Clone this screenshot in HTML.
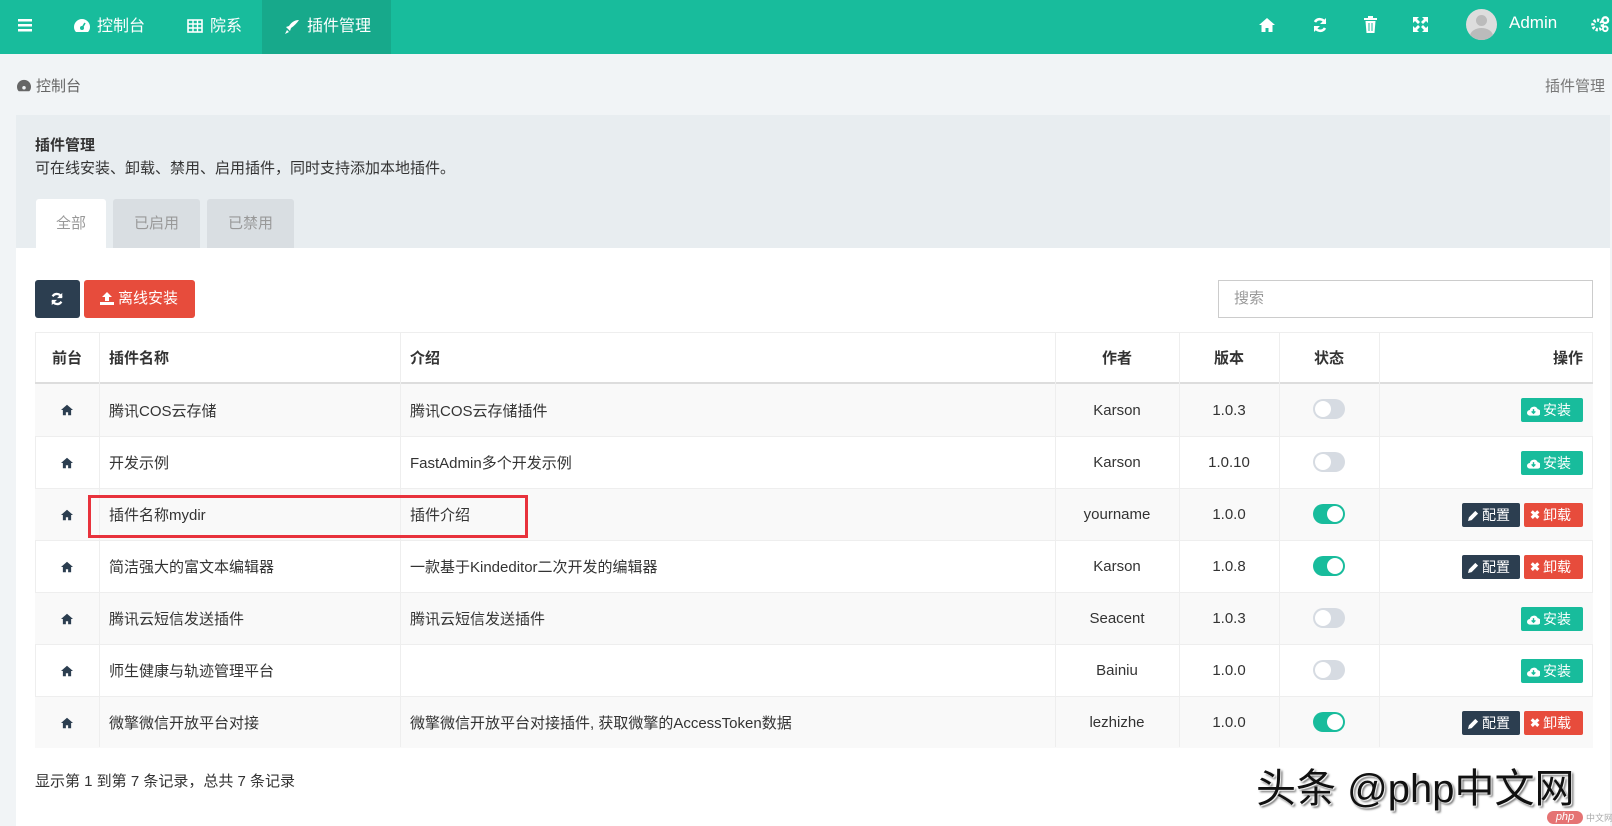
<!DOCTYPE html>
<html><head><meta charset="utf-8"><style>
*{margin:0;padding:0;box-sizing:border-box}
body{width:1612px;height:826px;overflow:hidden;background:#f1f4f6;font-family:"Liberation Sans","Noto Sans CJK SC",sans-serif;font-size:15px;color:#333;position:relative}
.a{position:absolute}
.nav{left:0;top:0;width:1612px;height:54px;background:#18bc9c}
.nt{position:absolute;color:#fff;font-size:16px;top:0;height:54px;line-height:54px;white-space:nowrap}
.panel{left:16px;top:115px;width:1594px;height:711px;background:#fff}
.ph{left:16px;top:115px;width:1594px;height:133px;background:#e8edf0}
.tab{top:199px;height:49px;line-height:49px;text-align:center;font-size:15px;color:#999;background:#d9dee2;border-radius:3px 3px 0 0}
.row{left:35px;width:1558px;height:52px;border-top:1px solid #eee}
.c{position:absolute;top:0;height:100%;display:flex;align-items:center;padding:0 10px;font-size:15px}
.vl{position:absolute;top:332px;width:1px;height:415px;background:#eee}
.tg{position:absolute;width:32px;height:20px;border-radius:10px;background:#d6dbe2}
.tg::after{content:"";position:absolute;top:2px;left:2px;width:16px;height:16px;border-radius:50%;background:#fff}
.tg.on{background:#18bc9c}.tg.on::after{left:14px}
.btn{position:absolute;height:24px;line-height:24px;color:#fff;font-size:14px;border-radius:2px;padding:0 6px;display:flex;align-items:center;gap:3px;white-space:nowrap}
</style></head><body>
<div class="a nav"></div>
<div class="a" style="left:262px;top:0;width:129px;height:54px;background:#17a98b"></div>
<svg class="a" style="left:18px;top:17px" width="16" height="16" viewBox="0 0 16 16"><rect y="2" width="14" height="2.5" fill="#fff"/><rect y="7" width="14" height="2.5" fill="#fff"/><rect y="12" width="14" height="2.5" fill="#fff"/></svg>
<svg class="a" style="left:73px;top:18px" width="18" height="16" viewBox="0 0 18 16"><path d="M9 1a8 8 0 0 0-8 8c0 2 .7 3.8 2 5h12c1.3-1.2 2-3 2-5a8 8 0 0 0-8-8z" fill="#fff"/><circle cx="9" cy="10" r="2" fill="#18bc9c"/><path d="M9 10l3-5" stroke="#18bc9c" stroke-width="1.6"/></svg>
<div class="nt" style="left:97px">控制台</div>
<svg class="a" style="left:187px;top:19px" width="16" height="14" viewBox="0 0 16 14"><rect x="1" y="1" width="14" height="12" fill="none" stroke="#fff" stroke-width="1.6"/><path d="M1 5h14M1 9h14M6 1v12M10.5 1v12" stroke="#fff" stroke-width="1.4"/></svg>
<div class="nt" style="left:210px">院系</div>
<svg class="a" style="left:284px;top:19px" width="16" height="16" viewBox="0 0 16 16"><path d="M15 1c-5 0-8 3-10 6l-3 1 2 2 2 2 1-3c3-2 6-5 8-8z M3 11l-2 4 4-2z" fill="#fff"/></svg>
<div class="nt" style="left:307px">插件管理</div>
<svg class="a" style="left:1258px;top:17px" width="18" height="16" viewBox="0 0 18 16"><path d="M9 1L1 8h2.5v7h4v-4h3v4h4V8H17z" fill="#fff"/></svg>
<svg class="a" style="left:1312px;top:17px" width="16" height="16" viewBox="0 0 16 16"><path d="M13 6a5.5 5.5 0 0 0-10-1M3 10a5.5 5.5 0 0 0 10 1" stroke="#fff" stroke-width="2.6" fill="none"/><path d="M14 1v6H8zM2 15V9h6z" fill="#fff"/></svg>
<svg class="a" style="left:1364px;top:16px" width="13" height="17" viewBox="0 0 13 17"><rect x="0" y="2" width="13" height="2" fill="#fff"/><rect x="4" y="0" width="5" height="2" fill="#fff"/><path d="M1.5 5h10l-1 12h-8z" fill="#fff"/><path d="M5 7v8M8 7v8" stroke="#18bc9c" stroke-width="1"/></svg>
<svg class="a" style="left:1412px;top:16px" width="17" height="17" viewBox="0 0 17 17"><path d="M1 1h6L5 3l3 3-2 2-3-3-2 2zM16 1v6l-2-2-3 3-2-2 3-3-2-2zM1 16v-6l2 2 3-3 2 2-3 3 2 2zM16 16h-6l2-2-3-3 2-2 3 3 2-2z" fill="#fff"/></svg>
<div class="a" style="left:1466px;top:9px;width:31px;height:31px;border-radius:50%;background:#ddd;overflow:hidden"><div class="a" style="left:10px;top:6px;width:11px;height:11px;border-radius:50%;background:#bbb"></div><div class="a" style="left:4px;top:19px;width:23px;height:16px;border-radius:50%;background:#bbb"></div></div>
<div class="nt" style="left:1509px;font-size:17px;line-height:46px">Admin</div>
<svg class="a" style="left:1591px;top:15px" width="19" height="18" viewBox="0 0 20 18"><circle cx="7" cy="10" r="5" fill="none" stroke="#fff" stroke-width="3.5" stroke-dasharray="2.2 1.6"/><circle cx="15" cy="5" r="3" fill="none" stroke="#fff" stroke-width="2.5"/><circle cx="15" cy="14" r="2.5" fill="none" stroke="#fff" stroke-width="2"/></svg>
<svg class="a" style="left:16px;top:79px" width="16" height="14" viewBox="0 0 18 16"><path d="M9 1a8 8 0 0 0-8 8c0 2 .7 3.8 2 5h12c1.3-1.2 2-3 2-5a8 8 0 0 0-8-8z" fill="#666"/><circle cx="9" cy="10" r="2" fill="#f1f4f6"/></svg>
<div class="a" style="left:36px;top:75px;font-size:15px;color:#666">控制台</div>
<div class="a" style="left:1545px;top:75px;font-size:15px;color:#777">插件管理</div>
<div class="a panel"></div>
<div class="a ph"></div>
<div class="a" style="left:35px;top:134px;font-size:15px;font-weight:bold;color:#333">插件管理</div>
<div class="a" style="left:35px;top:157px;font-size:15px;color:#333">可在线安装、卸载、禁用、启用插件，同时支持添加本地插件。</div>
<div class="a tab" style="left:36px;width:70px;background:#fff;color:#999">全部</div>
<div class="a tab" style="left:113px;width:87px">已启用</div>
<div class="a tab" style="left:207px;width:87px">已禁用</div>
<div class="a" style="left:35px;top:280px;width:45px;height:38px;background:#2c3e50;border-radius:3px"></div>
<svg class="a" style="left:50px;top:292px" width="14" height="14" viewBox="0 0 16 16"><path d="M13 6a5.5 5.5 0 0 0-10-1M3 10a5.5 5.5 0 0 0 10 1" stroke="#fff" stroke-width="2.6" fill="none"/><path d="M14 1v6H8zM2 15V9h6z" fill="#fff"/></svg>
<div class="a" style="left:84px;top:280px;width:111px;height:38px;background:#e74c3c;border-radius:3px;color:#fff;font-size:15px;line-height:38px;padding-left:34px">离线安装</div>
<svg class="a" style="left:100px;top:292px" width="14" height="13" viewBox="0 0 14 13"><path d="M7 0l5 5H9v4H5V5H2z M0 10h14v3H0z" fill="#fff"/></svg>
<div class="a" style="left:1218px;top:280px;width:375px;height:38px;border:1px solid #ccc;background:#fff;font-size:15px;color:#999;line-height:36px;padding-left:15px">搜索</div>
<div class="a" style="left:35px;top:332px;width:1558px;height:415px;border:1px solid #eee"></div>
<div class="a row" style="top:332px;height:51px;border-top:none;font-weight:bold">
<div class="c" style="left:0;width:64px;justify-content:center">前台</div>
<div class="c" style="left:64px">插件名称</div>
<div class="c" style="left:365px">介绍</div>
<div class="c" style="left:1020px;width:124px;justify-content:center">作者</div>
<div class="c" style="left:1144px;width:100px;justify-content:center">版本</div>
<div class="c" style="left:1244px;width:100px;justify-content:center">状态</div>
<div class="c" style="right:0;justify-content:flex-end">操作</div>
</div>
<div class="a" style="left:35px;top:382px;width:1558px;height:2px;background:#ddd"></div>
<div id="rows"></div>
<div class="vl" style="left:99px"></div><div class="vl" style="left:400px"></div><div class="vl" style="left:1055px"></div><div class="vl" style="left:1179px"></div><div class="vl" style="left:1279px"></div><div class="vl" style="left:1379px"></div>
<script>
var d=[["腾讯COS云存储","腾讯COS云存储插件","Karson","1.0.3",0],["开发示例","FastAdmin多个开发示例","Karson","1.0.10",0],["插件名称mydir","插件介绍","yourname","1.0.0",1],["简洁强大的富文本编辑器","一款基于Kindeditor二次开发的编辑器","Karson","1.0.8",1],["腾讯云短信发送插件","腾讯云短信发送插件","Seacent","1.0.3",0],["师生健康与轨迹管理平台","","Bainiu","1.0.0",0],["微擎微信开放平台对接","微擎微信开放平台对接插件, 获取微擎的AccessToken数据","lezhizhe","1.0.0",1]];
var h="",home='<svg width="14" height="12" viewBox="0 0 18 16"><path d="M9 1L1 8h2.5v7h4v-4h3v4h4V8H17z" fill="#2c3e50"/></svg>';
d.forEach(function(r,i){var y=384+i*52;
h+='<div class="a row" style="top:'+y+'px;height:52px;'+(i%2==0?'background:#f9f9f9;':'')+(i==0?'border-top:none':'')+'">'+
'<div class="c" style="left:0;width:64px;justify-content:center">'+home+'</div>'+
'<div class="c" style="left:64px">'+r[0]+'</div><div class="c" style="left:365px">'+r[1]+'</div>'+
'<div class="c" style="left:1020px;width:124px;justify-content:center">'+r[2]+'</div>'+
'<div class="c" style="left:1144px;width:100px;justify-content:center">'+r[3]+'</div>'+
'<div class="tg'+(r[4]?' on':'')+'" style="left:1278px;top:15px"></div>';
if(r[4]){h+='<div class="btn" style="left:1427px;top:14px;width:58px;background:#2c3e50"><svg width="11" height="11" viewBox="0 0 12 12"><path d="M0 12l1-4 7-7 3 3-7 7z" fill="#fff"/></svg>配置</div><div class="btn" style="left:1489px;top:14px;width:59px;background:#e74c3c"><b style="font-size:12px">✖</b>卸载</div>'}
else{h+='<div class="btn" style="left:1486px;top:14px;width:62px;background:#18bc9c"><svg width="13" height="11" viewBox="0 0 14 11"><path d="M3 11a3 3 0 0 1 0-6 4.5 4.5 0 0 1 8.5-1A3.5 3.5 0 0 1 11 11z" fill="#fff"/><path d="M7 4v4M5 6.5l2 2 2-2" stroke="#18bc9c" stroke-width="1.5" fill="none"/></svg>安装</div>'}
h+='</div>'});
document.getElementById('rows').outerHTML=h;
</script>
<div class="a" style="left:88px;top:495px;width:440px;height:43px;border:3px solid #e8323c"></div>
<div class="a" style="left:35px;top:770px;font-size:15px;color:#333">显示第 1 到第 7 条记录，总共 7 条记录</div>
<div class="a" style="left:1256px;top:756px;font-size:40px;color:#111;text-shadow:1px 1px 1px #fff,2px 2px 2px #555;white-space:nowrap">头条 @php中文网</div>
<div class="a" style="left:1547px;top:811px;width:36px;height:13px;border-radius:7px;background:#e57373;color:#fff;font-size:11px;line-height:13px;text-align:center;font-style:italic">php</div>
<div class="a" style="left:1586px;top:811px;font-size:9px;color:#aaa;white-space:nowrap">中文网</div>
</body></html>
